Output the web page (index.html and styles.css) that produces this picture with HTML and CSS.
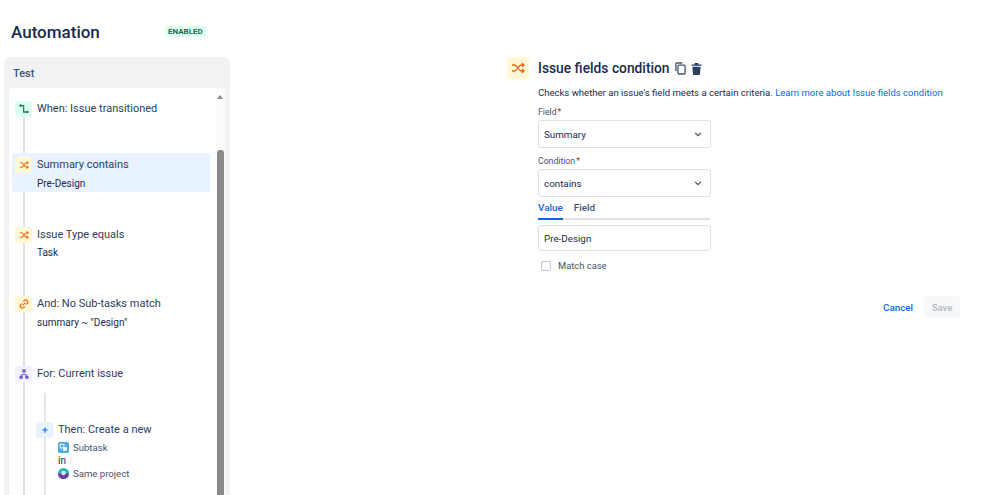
FILE: index.html
```html
<!DOCTYPE html>
<html lang="en">
<head>
<meta charset="UTF-8">
<meta name="viewport" content="width=device-width, initial-scale=1.0">
<title>Automation</title>
<link rel="stylesheet" href="styles.css">
</head>
<body>
<div class="page">
    <div class="left">
        <div class="top">
            <h1>Automation</h1>
            <span class="lozenge">ENABLED</span>
        </div>
        <div class="panel">
            <div class="panel-title">Test</div>
            <div class="scroller">
                <div class="steps">
                    <div class="step first">
                        <span class="tile green">
                            <svg viewBox="0 0 16 16"><path d="M3.5 3.5h4v8.5h5" fill="none" stroke="currentColor" stroke-width="1.7"/><circle cx="3.5" cy="3.5" r="1.7" fill="currentColor"/><circle cx="12.5" cy="12" r="1.7" fill="currentColor"/></svg>
                        </span>
                        <div class="step-text"><div class="step-name">When: Issue transitioned</div></div>
                    </div>
                    <div class="step selected">
                        <span class="tile yellow">
                            <svg viewBox="0 0 16 16"><path d="M2.5 5h2.2c3 0 3.6 6 6.6 6h2M2.5 11h2.2c3 0 3.6-6 6.6-6h2M11.5 3l2 2-2 2M11.5 9l2 2-2 2" fill="none" stroke="currentColor" stroke-width="1.4"/></svg>
                        </span>
                        <div class="step-text">
                            <div class="step-name">Summary contains</div>
                            <div class="step-sub">Pre-Design</div>
                        </div>
                    </div>
                    <div class="step">
                        <span class="tile yellow">
                            <svg viewBox="0 0 16 16"><path d="M2.5 5h2.2c3 0 3.6 6 6.6 6h2M2.5 11h2.2c3 0 3.6-6 6.6-6h2M11.5 3l2 2-2 2M11.5 9l2 2-2 2" fill="none" stroke="currentColor" stroke-width="1.4"/></svg>
                        </span>
                        <div class="step-text">
                            <div class="step-name">Issue Type equals</div>
                            <div class="step-sub">Task</div>
                        </div>
                    </div>
                    <div class="step">
                        <span class="tile yellow">
                            <svg viewBox="0 0 16 16"><path d="M6.2 9.8l3.6-3.600M6.800 4.800l1.400-1.400a2.800 2.800 0 0 1 4 4l-1.400 1.400M9.200 11.200l-1.400 1.400a2.800 2.800 0 0 1-4-4l1.400-1.400" fill="none" stroke="currentColor" stroke-width="1.6"/></svg>
                        </span>
                        <div class="step-text">
                            <div class="step-name">And: No Sub-tasks match</div>
                            <div class="step-sub">summary ~ "Design"</div>
                        </div>
                    </div>
                    <div class="step last">
                        <span class="tile purple">
                            <svg viewBox="0 0 16 16"><path d="M8 6v3M4.500 11V9h7v2" fill="none" stroke="currentColor" stroke-width="1.2"/><rect x="5.800" y="1.800" width="4.400" height="4" fill="currentColor"/><rect x="2" y="10.400" width="4.400" height="4" fill="currentColor"/><rect x="9.600" y="10.400" width="4.400" height="4" fill="currentColor"/></svg>
                        </span>
                        <div class="step-text"><div class="step-name">For: Current issue</div></div>
                    </div>
                    <div class="nested">
                        <div class="step">
                            <span class="tile blue">
                                <svg viewBox="0 0 16 16"><path d="M8 4.500v7M4.500 8h7" fill="none" stroke="currentColor" stroke-width="1.6"/></svg>
                            </span>
                            <div class="step-text">
                                <div class="step-name">Then: Create a new</div>
                                <div class="step-sub with-icon">
                                    <svg class="mini" viewBox="0 0 12 12"><rect width="12" height="12" rx="2" fill="#4bade8"/><rect x="2.500" y="2.500" width="4" height="4" fill="none" stroke="#fff"/><rect x="5.500" y="5.500" width="4" height="4" fill="#fff"/></svg>
                                    Subtask
                                </div>
                                <div class="step-sub">in</div>
                                <div class="step-sub with-icon">
                                    <svg class="mini" viewBox="0 0 12 12"><circle cx="6" cy="6" r="6" fill="#2fb5b5"/><path d="M0 6a6 6 0 0 0 12 0z" fill="#6b3fa8"/><circle cx="6" cy="5.500" r="2.400" fill="#d9f3f5"/></svg>
                                    Same project
                                </div>
                            </div>
                        </div>
                    </div>
                </div>
                <div class="scrollbar">
                    <span class="arrow"></span>
                    <span class="thumb"></span>
                </div>
            </div>
        </div>
    </div>

    <div class="main">
        <span class="tile yellow big">
            <svg viewBox="0 0 16 16"><path d="M2 5h2.400c3.200 0 3.800 6 7 6H14M2 11h2.400c3.200 0 3.800-6 7-6H14M12 3l2 2-2 2M12 9l2 2-2 2" fill="none" stroke="currentColor" stroke-width="1.3"/></svg>
        </span>
        <div class="editor">
            <div class="editor-head">
                <h2>Issue fields condition</h2>
                <svg class="head-icon" viewBox="0 0 12 14"><rect x="3.200" y="3.200" width="7.800" height="9.800" rx="1" fill="none" stroke="currentColor" stroke-width="1.4"/><path d="M1 10V2a1 1 0 0 1 1-1h6" fill="none" stroke="currentColor" stroke-width="1.4"/></svg>
                <svg class="head-icon trash" viewBox="0 0 12 14"><path d="M0.500 2.500h11v1.500h-11zM4 1h4v1.500H4zM1.500 5h9l-.7 8a1 1 0 0 1-1 1H3.200a1 1 0 0 1-1-1z" fill="currentColor"/></svg>
            </div>
            <p class="desc">Checks whether an issue's field meets a certain criteria. <a href="#">Learn more about Issue fields condition</a></p>

            <div class="form">
                <label class="field-label">Field<span class="req">*</span></label>
                <div class="select">Summary
                    <svg class="chev" viewBox="0 0 10 6"><path d="M1.500 1l3.500 3.500L8.500 1" fill="none" stroke="currentColor" stroke-width="1.6"/></svg>
                </div>
                <label class="field-label">Condition<span class="req">*</span></label>
                <div class="select">contains
                    <svg class="chev" viewBox="0 0 10 6"><path d="M1.500 1l3.500 3.500L8.500 1" fill="none" stroke="currentColor" stroke-width="1.6"/></svg>
                </div>
                <div class="tabs">
                    <span class="tab active">Value</span>
                    <span class="tab">Field</span>
                </div>
                <div class="text-input">Pre-Design</div>
                <div class="check-row">
                    <span class="checkbox"></span>
                    <span>Match case</span>
                </div>
            </div>

            <div class="actions">
                <a href="#" class="cancel">Cancel</a>
                <span class="save">Save</span>
            </div>
        </div>
    </div>
</div>
</body>
</html>
```

FILE: styles.css
```css
* {
    box-sizing: border-box;
}
html, body {
    height: 100%;
}
body {
    margin: 0;
    font-family: Roboto, "Noto Sans", sans-serif;
    font-size: 10px;
    color: #172b4d;
    background-color: #fff;
    overflow: hidden;
}
.page {
    display: flex;
    height: 495px;
}
.left {
    width: 230px;
    margin-left: 4px;
    flex-shrink: 0;
    display: flex;
    flex-direction: column;
}
.top {
    height: 57px;
    display: flex;
    align-items: center;
    padding: 6px 0 0 7px;
}
h1 {
    margin: 0;
    width: 154px;
    font-size: 17px;
    font-weight: 500;
    color: #172b4d;
}
.lozenge {
    padding: 1px 3px;
    border-radius: 2px;
    background-color: #dcfff1;
    color: #216e4e;
    font-size: 8px;
    font-weight: 700;
}
.panel {
    flex: 1;
    min-height: 0;
    width: 226px;
    background-color: #f1f2f4;
    border-radius: 6px 6px 0 0;
    padding: 0 5px;
    display: flex;
    flex-direction: column;
}
.panel-title {
    height: 31px;
    padding: 10px 4px 0;
    font-size: 11px;
    font-weight: 500;
    color: #44546f;
}
.scroller {
    flex: 1;
    min-height: 0;
    background-color: #fff;
    border-radius: 4px 0 0 0;
    display: flex;
    overflow: hidden;
}
.steps {
    width: 205px;
    padding: 9px 0 0 3px;
    flex-shrink: 0;
    background-image: linear-gradient(#dfe1e6, #dfe1e6);
    background-repeat: no-repeat;
    background-position: 14px 20px;
    background-size: 2px 100%;
}

/* one rule step: tile on the left, text next to it */
.step {
    display: flex;
    align-items: flex-start;
    gap: 5px;
    padding: 4px 3px 1px;
    width: 198px;
    min-height: 39px;
    margin-bottom: 30.5px;
    border-radius: 3px;
}
.step.first {
    min-height: 56px;
    margin-bottom: 0;
}
.step.selected {
    background-color: #e9f2ff;
}
.step.last {
    min-height: 0;
    margin-bottom: 0;
}
.tile {
    width: 17px;
    height: 16px;
    flex-shrink: 0;
    border-radius: 3px;
    display: flex;
    align-items: center;
    justify-content: center;
}
.tile svg {
    width: 12px;
    height: 12px;
}
.tile.green {
    background-color: #dcfff1;
    color: #1f845a;
}
.tile.yellow {
    background-color: #fff7d6;
    color: #e56910;
}
.tile.purple {
    background-color: #f3f0ff;
    color: #6e5dc6;
}
.tile.blue {
    background-color: #e9f2ff;
    color: #0c66e4;
}
.step-name {
    font-size: 11px;
    line-height: 16px;
    color: #2c3e5d;
}
.step-sub {
    margin-top: 2.5px;
    font-size: 10px;
    line-height: 15px;
}
.step-sub.with-icon {
    display: flex;
    align-items: center;
    gap: 4px;
    font-size: 9.6px;
    color: #44546f;
}
.mini {
    width: 11px;
    height: 11px;
}
.nested {
    margin: 10px 0 0 21px;
    padding: 29px 0 40px;
    background-image: linear-gradient(#e4e6ea, #e4e6ea);
    background-repeat: no-repeat;
    background-position: 11px 0;
    background-size: 2px 100%;
}
.nested .step {
    width: 170px;
    padding-top: 0;
    margin-bottom: 0;
}
.nested .step-name {
    margin-bottom: 3.5px;
}
.nested .step-sub {
    margin-top: 0;
    line-height: 13px;
}

.scrollbar {
    width: 11px;
    margin-left: 1px;
    background-color: #fcfcfc;
    display: flex;
    flex-direction: column;
    align-items: center;
    padding-top: 7px;
}
.arrow {
    width: 0;
    height: 0;
    border-left: 3.5px solid transparent;
    border-right: 3.5px solid transparent;
    border-bottom: 4px solid #8a8a8a;
}
.thumb {
    width: 7px;
    flex: 1;
    margin-top: 51px;
    border-radius: 3px 3px 0 0;
    background-color: #8a8a8a;
}

.main {
    flex: 1;
    display: flex;
    align-items: flex-start;
    gap: 9px;
    padding: 57px 0 0 273px;
}
.tile.big {
    width: 22px;
    height: 22px;
}
.tile.big svg {
    width: 16px;
    height: 16px;
}
.editor {
    width: 422px;
}
.editor-head {
    display: flex;
    align-items: center;
    height: 22px;
}
h2 {
    margin: 0 5px 0 0;
    font-size: 13.8px;
    font-weight: 500;
    color: #172b4d;
}
.head-icon {
    width: 11px;
    height: 13px;
    color: #44546f;
    margin-right: 5px;
}
.head-icon.trash {
    color: #2c3e5d;
}
.desc {
    margin: 7px 0 0;
    font-size: 9.55px;
    line-height: 13px;
    white-space: nowrap;
}
.desc a {
    color: #0c66e4;
    text-decoration: none;
}
.form {
    width: 173px;
}
.field-label {
    display: block;
    margin-top: 7px;
    font-size: 8.7px;
    line-height: 12px;
    color: #44546f;
}
.req {
    color: #ae2a19;
    margin-left: 1px;
}
.select {
    height: 28px;
    margin-top: 2px;
    padding: 0 6px 0 5px;
    border: 1px solid #dfe1e6;
    border-radius: 3px;
    display: flex;
    align-items: center;
    justify-content: space-between;
    font-size: 9.8px;
}
.chev {
    width: 8px;
    height: 5px;
    margin-right: 2px;
    color: #44546f;
}
.tabs {
    display: flex;
    gap: 11px;
    height: 23px;
    border-bottom: 2px solid #dfe1e6;
    width: 172px;
}
.tab {
    font-size: 9.9px;
    font-weight: 500;
    line-height: 22px;
    color: #44546f;
    height: 23px;
}
.tab.active {
    color: #0c66e4;
    border-bottom: 2px solid #0c66e4;
}
.text-input {
    height: 26px;
    margin-top: 5px;
    padding: 1px 5px 0;
    border: 1px solid #dfe1e6;
    border-radius: 3px;
    display: flex;
    align-items: center;
    font-size: 9.8px;
}
.check-row {
    display: flex;
    align-items: center;
    gap: 7px;
    margin-top: 9px;
    padding-left: 3px;
    font-size: 9.4px;
    color: #44546f;
}
.checkbox {
    width: 10px;
    height: 10px;
    border: 1px solid #c1c7d0;
    border-radius: 2px;
}
.actions {
    display: flex;
    justify-content: flex-end;
    align-items: center;
    gap: 11px;
    margin-top: 25px;
}
.cancel {
    color: #0c66e4;
    text-decoration: none;
    font-size: 9.8px;
    font-weight: 500;
}
.save {
    width: 36px;
    height: 22px;
    border-radius: 3px;
    background-color: #f7f8f9;
    color: #b3b9c4;
    font-size: 9.6px;
    font-weight: 500;
    display: flex;
    align-items: center;
    justify-content: center;
}
```
